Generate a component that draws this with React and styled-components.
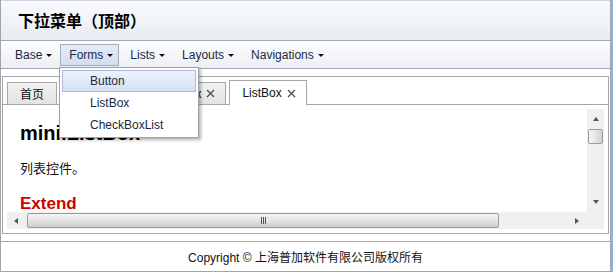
import React from 'react'
import styled, { createGlobalStyle } from 'styled-components'

const GlobalStyle = createGlobalStyle`
  html, body {
    margin: 0;
    padding: 0;
    background: #fff;
  }
  body {
    font-family: "Liberation Sans", "Noto Sans CJK SC", sans-serif;
    font-size: 12px;
    color: #000;
  }
`

const menus = [
  { label: 'Base' },
  { label: 'Forms', open: true },
  { label: 'Lists' },
  { label: 'Layouts' },
  { label: 'Navigations' },
]

const dropItems = ['Button', 'ListBox', 'CheckBoxList']

const tabs = [
  { label: '首页' },
  { label: 'Button', closable: true },
  { label: 'CheckBox', closable: true },
  { label: 'ListBox', closable: true, active: true },
]

export default function App() {
  return (
    <>
      <GlobalStyle />
      <Frame>
        <Window>
          <Header>下拉菜单（顶部）</Header>
          <MenuBar>
            {menus.map((m) => (
              <MenuItem key={m.label} $open={m.open}>
                {m.label}
                <Caret />
              </MenuItem>
            ))}
          </MenuBar>
          <Center>
            <TabPanel>
              <TabBar>
                {tabs.map((t) => (
                  <Tab key={t.label} $active={t.active}>
                    {t.label}
                    {t.closable && <CloseIcon />}
                  </Tab>
                ))}
              </TabBar>
              <TabBody>
                <ScrollArea>
                  <Content>
                    <Title>mini.ListBox</Title>
                    <Desc>列表控件。</Desc>
                    <Extend>Extend</Extend>
                  </Content>
                  <VScroll>
                    <ArrowUp />
                    <VThumb />
                    <ArrowDown />
                  </VScroll>
                  <HScroll>
                    <ArrowLeft />
                    <HThumb>
                      <Grip><i /><i /><i /></Grip>
                    </HThumb>
                    <ArrowRight />
                  </HScroll>
                  <Corner />
                </ScrollArea>
              </TabBody>
            </TabPanel>
          </Center>
          <Footer>Copyright © 上海普加软件有限公司版权所有</Footer>
        </Window>
        <DropMenu>
          {dropItems.map((d, i) => (
            <DropItem key={d} $hover={i === 0}>{d}</DropItem>
          ))}
        </DropMenu>
      </Frame>
    </>
  )
}

function CloseIcon() {
  return (
    <CloseSvg width="9" height="9" viewBox="0 0 9 9">
      <path d="M1 1 L8 8 M8 1 L1 8" stroke="#4a4a4a" strokeWidth="1.2" fill="none" />
    </CloseSvg>
  )
}

// Styled Components
const Frame = styled.div`
  position: relative;
  width: 613px;
  height: 272px;
  box-sizing: border-box;
  border-right: 2px solid #8eb4dc;
`

const Window = styled.div`
  height: 100%;
  box-sizing: border-box;
  display: flex;
  flex-direction: column;
  border-left: 1px solid #a2a6ac;
  border-right: 1px solid #a2a6ac;
  border-bottom: 1px solid #a2a6ac;
  background: #fff;
`

const Header = styled.div`
  height: 41px;
  flex: none;
  box-sizing: border-box;
  border-top: 1px solid #d0d5dc;
  border-bottom: 1px solid #a3a7ad;
  background: linear-gradient(#f8f9fc, #e8edf3);
  padding: 0 0 2px 17px;
  display: flex;
  align-items: center;
  font-size: 16px;
  font-weight: bold;
  color: #000;
`

const MenuBar = styled.div`
  height: 28px;
  flex: none;
  box-sizing: border-box;
  border-bottom: 1px solid #a3a7ad;
  background: linear-gradient(#fdfdfe, #eceff4);
  padding-left: 5px;
  display: flex;
  align-items: center;
  gap: 2px;
`

const MenuItem = styled.div`
  height: 22px;
  box-sizing: border-box;
  display: flex;
  align-items: center;
  padding: 0 5px 0 8px;
  border: 1px solid ${(p) => (p.$open ? '#a5adb9' : 'transparent')};
  background: ${(p) => (p.$open ? 'linear-gradient(#e3ebfa, #d3ddf2)' : 'transparent')};
  color: #1c2840;
  font-size: 12px;
`

const Caret = styled.span`
  margin-left: 4px;
  width: 0;
  height: 0;
  border-left: 3px solid transparent;
  border-right: 3px solid transparent;
  border-top: 3px solid #111;
  margin-top: 1px;
`

const Center = styled.div`
  flex: 1;
  padding: 7px 1px;
  display: flex;
  min-height: 0;
`

const TabPanel = styled.div`
  flex: 1;
  display: flex;
  flex-direction: column;
  border: 1px solid #a6a6a6;
`

const TabBar = styled.div`
  height: 28px;
  flex: none;
  box-sizing: border-box;
  border-bottom: 1px solid #a6a6a6;
  display: flex;
  align-items: flex-end;
  padding-left: 4px;
  gap: 2px;
`

const Tab = styled.div`
  box-sizing: border-box;
  height: ${(p) => (p.$active ? '25px' : '22px')};
  margin-bottom: ${(p) => (p.$active ? '-1px' : '0')};
  margin-left: ${(p) => (p.$active ? '1px' : '0')};
  padding: 0 10px 0 12px;
  display: flex;
  align-items: center;
  border: 1px solid #a6a6a6;
  border-bottom: none;
  background: ${(p) => (p.$active ? '#fff' : 'linear-gradient(#f2f2f2, #e3e3e3)')};
  color: #111;
  font-size: 12px;
  white-space: nowrap;
  &:first-child {
    padding-right: 12px;
  }
`

const CloseSvg = styled.svg`
  margin-left: 5px;
  display: block;
`

const TabBody = styled.div`
  flex: 1;
  padding: 4px;
  display: flex;
  min-height: 0;
`

const ScrollArea = styled.div`
  flex: 1;
  display: grid;
  grid-template-columns: 1fr 17px;
  grid-template-rows: 1fr 17px;
  overflow: hidden;
`

const Content = styled.div`
  padding: 13px 13px 0;
  overflow: hidden;
`

const Title = styled.h1`
  margin: 0;
  font-size: 20px;
  line-height: 23px;
  font-weight: bold;
  color: #000;
`

const Desc = styled.p`
  margin: 14px 0 0;
  font-size: 13px;
  line-height: 20px;
  color: #111;
`

const Extend = styled.h2`
  margin: 15px 0 0;
  font-size: 17px;
  line-height: 20px;
  font-weight: bold;
  color: #d10000;
`

const VScroll = styled.div`
  background: #f0f0f0;
  display: flex;
  flex-direction: column;
  align-items: center;
  padding: 6px 0 6px;
`

const HScroll = styled.div`
  background: #f0f0f0;
  display: flex;
  align-items: center;
  padding: 0 6px 0 6px;
`

const Corner = styled.div`
  background: #f0f0f0;
`

const ArrowUp = styled.span`
  width: 0;
  height: 0;
  border-left: 3.5px solid transparent;
  border-right: 3.5px solid transparent;
  border-bottom: 4px solid #555;
  margin-top: 2px;
`

const ArrowDown = styled.span`
  width: 0;
  height: 0;
  margin-top: auto;
  margin-bottom: 2px;
  border-left: 3.5px solid transparent;
  border-right: 3.5px solid transparent;
  border-top: 4px solid #555;
`

const ArrowLeft = styled.span`
  width: 0;
  height: 0;
  border-top: 3.5px solid transparent;
  border-bottom: 3.5px solid transparent;
  border-right: 4px solid #555;
  margin-left: 1px;
`

const ArrowRight = styled.span`
  width: 0;
  height: 0;
  margin-left: auto;
  margin-right: 2px;
  border-top: 3.5px solid transparent;
  border-bottom: 3.5px solid transparent;
  border-left: 4px solid #555;
`

const VThumb = styled.div`
  margin-top: 8px;
  width: 15px;
  height: 15px;
  box-sizing: border-box;
  border: 1px solid #9b9b9b;
  border-radius: 2px;
  background: linear-gradient(90deg, #f7f7f7, #e2e2e2 60%, #cfcfcf);
`

const HThumb = styled.div`
  margin-left: 9px;
  width: 472px;
  height: 15px;
  box-sizing: border-box;
  border: 1px solid #9b9b9b;
  border-radius: 2px;
  background: linear-gradient(#f5f5f5, #e0e0e0 60%, #cdcdcd);
  display: flex;
  align-items: center;
  justify-content: center;
`

const Grip = styled.span`
  display: flex;
  gap: 1px;
  i {
    display: block;
    width: 1px;
    height: 7px;
    background: #555;
  }
`

const Footer = styled.div`
  height: 30px;
  flex: none;
  box-sizing: border-box;
  border-top: 1px solid #a3a7ad;
  display: flex;
  align-items: center;
  justify-content: center;
  font-size: 12px;
  color: #111;
  white-space: pre;
`

const DropMenu = styled.div`
  position: absolute;
  left: 59px;
  top: 67px;
  width: 140px;
  box-sizing: border-box;
  padding: 2px 2px 1px;
  background: #fff;
  border: 1px solid #a0a0a0;
  box-shadow: 2px 2px 3px rgba(0, 0, 0, 0.3);
  z-index: 10;
`

const DropItem = styled.div`
  height: 22px;
  box-sizing: border-box;
  display: flex;
  align-items: center;
  padding-left: 27px;
  border: 1px solid ${(p) => (p.$hover ? '#aab8e2' : 'transparent')};
  background: ${(p) => (p.$hover ? 'linear-gradient(#edf2fd, #d6e0f6)' : 'transparent')};
  color: #1c2840;
  font-size: 12px;
`
